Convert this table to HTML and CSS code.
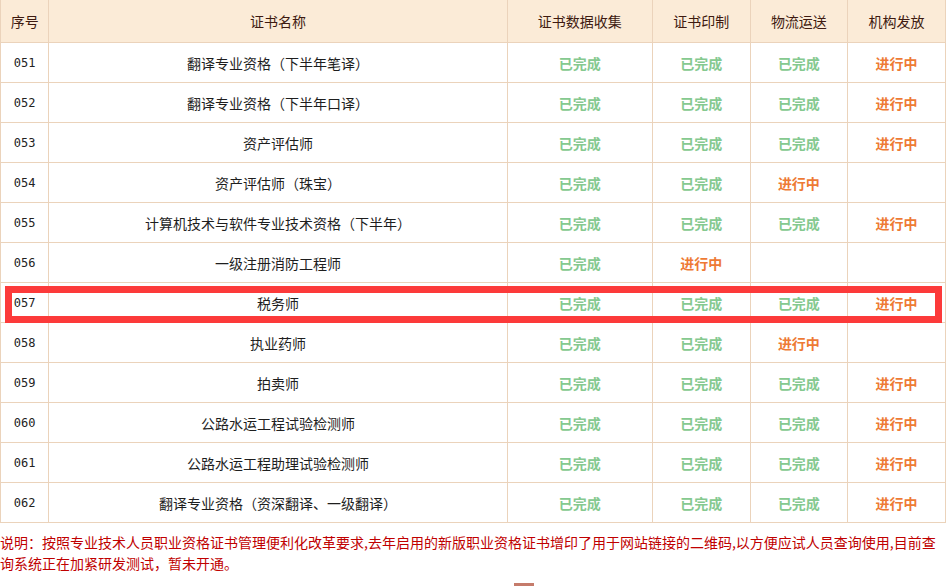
FILE: index.html
```html
<!DOCTYPE html>
<html lang="zh-CN">
<head>
    <meta charset="UTF-8">
    <title>证书发放进度</title>
    <link rel="stylesheet" href="styles.css">
</head>
<body>
    <div class="table-wrap">
        <table class="progress">
            <colgroup>
                <col class="col-no">
                <col class="col-name">
                <col class="col-data">
                <col class="col-step">
                <col class="col-step">
                <col class="col-step">
            </colgroup>
            <thead>
                <tr>
                    <th>序号</th>
                    <th>证书名称</th>
                    <th>证书数据收集</th>
                    <th>证书印制</th>
                    <th>物流运送</th>
                    <th>机构发放</th>
                </tr>
            </thead>
            <tbody>
                <tr>
                    <td class="no">051</td>
                    <td>翻译专业资格（下半年笔译）</td>
                    <td class="done">已完成</td>
                    <td class="done">已完成</td>
                    <td class="done">已完成</td>
                    <td class="doing">进行中</td>
                </tr>
                <tr>
                    <td class="no">052</td>
                    <td>翻译专业资格（下半年口译）</td>
                    <td class="done">已完成</td>
                    <td class="done">已完成</td>
                    <td class="done">已完成</td>
                    <td class="doing">进行中</td>
                </tr>
                <tr>
                    <td class="no">053</td>
                    <td>资产评估师</td>
                    <td class="done">已完成</td>
                    <td class="done">已完成</td>
                    <td class="done">已完成</td>
                    <td class="doing">进行中</td>
                </tr>
                <tr>
                    <td class="no">054</td>
                    <td>资产评估师（珠宝）</td>
                    <td class="done">已完成</td>
                    <td class="done">已完成</td>
                    <td class="doing">进行中</td>
                    <td></td>
                </tr>
                <tr>
                    <td class="no">055</td>
                    <td>计算机技术与软件专业技术资格（下半年）</td>
                    <td class="done">已完成</td>
                    <td class="done">已完成</td>
                    <td class="done">已完成</td>
                    <td class="doing">进行中</td>
                </tr>
                <tr>
                    <td class="no">056</td>
                    <td>一级注册消防工程师</td>
                    <td class="done">已完成</td>
                    <td class="doing">进行中</td>
                    <td></td>
                    <td></td>
                </tr>
                <tr>
                    <td class="no">057</td>
                    <td>税务师</td>
                    <td class="done">已完成</td>
                    <td class="done">已完成</td>
                    <td class="done">已完成</td>
                    <td class="doing">进行中</td>
                </tr>
                <tr>
                    <td class="no">058</td>
                    <td>执业药师</td>
                    <td class="done">已完成</td>
                    <td class="done">已完成</td>
                    <td class="doing">进行中</td>
                    <td></td>
                </tr>
                <tr>
                    <td class="no">059</td>
                    <td>拍卖师</td>
                    <td class="done">已完成</td>
                    <td class="done">已完成</td>
                    <td class="done">已完成</td>
                    <td class="doing">进行中</td>
                </tr>
                <tr>
                    <td class="no">060</td>
                    <td>公路水运工程试验检测师</td>
                    <td class="done">已完成</td>
                    <td class="done">已完成</td>
                    <td class="done">已完成</td>
                    <td class="doing">进行中</td>
                </tr>
                <tr>
                    <td class="no">061</td>
                    <td>公路水运工程助理试验检测师</td>
                    <td class="done">已完成</td>
                    <td class="done">已完成</td>
                    <td class="done">已完成</td>
                    <td class="doing">进行中</td>
                </tr>
                <tr>
                    <td class="no">062</td>
                    <td>翻译专业资格（资深翻译、一级翻译）</td>
                    <td class="done">已完成</td>
                    <td class="done">已完成</td>
                    <td class="done">已完成</td>
                    <td class="doing">进行中</td>
                </tr>
            </tbody>
        </table>
        <!-- red mark around row 057 -->
        <div class="mark"></div>
    </div>
    <p class="note">说明：按照专业技术人员职业资格证书管理便利化改革要求,去年启用的新版职业资格证书增印了用于网站链接的二维码,以方便应试人员查询使用,目前查询系统正在加紧研发测试，暂未开通。</p>
    <div class="pager"></div>
</body>
</html>
```

FILE: styles.css
```css
body {
    margin: 0;
    background: #fff;
    font-family: "Noto Sans CJK SC", "Liberation Sans", sans-serif;
    font-size: 14px;
    color: #1a1a1a;
}
.table-wrap {
    position: relative;
    width: 946px;
}
.progress {
    width: 946px;
    border-collapse: collapse;
    table-layout: fixed;
}
.col-no { width: 48px; }
.col-name { width: 455px; }
.col-data { width: 144px; }
.col-step { width: 97px; }
.progress th,
.progress td {
    border: 1px solid #ebd3bb;
    text-align: center;
    padding: 0;
    font-weight: normal;
    line-height: 1;
}
.progress th {
    height: 42px;
    background: #fbebd7;
    color: #3e1a10;
    font-size: 14px;
    border-top: none;
}
.progress td {
    height: 39px;
    font-size: 14px;
    color: #1e1e1e;
}
.progress td.no {
    font-family: "DejaVu Sans Mono", "Liberation Mono", monospace;
    font-size: 12px;
    color: #222;
}
.progress td.done {
    color: #85c98f;
    font-weight: bold;
}
.progress td.doing {
    color: #ee7a34;
    font-weight: bold;
}
.mark {
    position: absolute;
    left: 5px;
    top: 286px;
    width: 923px;
    height: 23px;
    border: 7px solid #fc3a3a;
}
.note {
    width: 946px;
    margin: 9px 0 0;
    color: #c00000;
    font-size: 14px;
    line-height: 21px;
}
.pager {
    width: 20px;
    height: 3px;
    margin: 9px 0 0 514px;
    background: #c57b6b;
}
```
